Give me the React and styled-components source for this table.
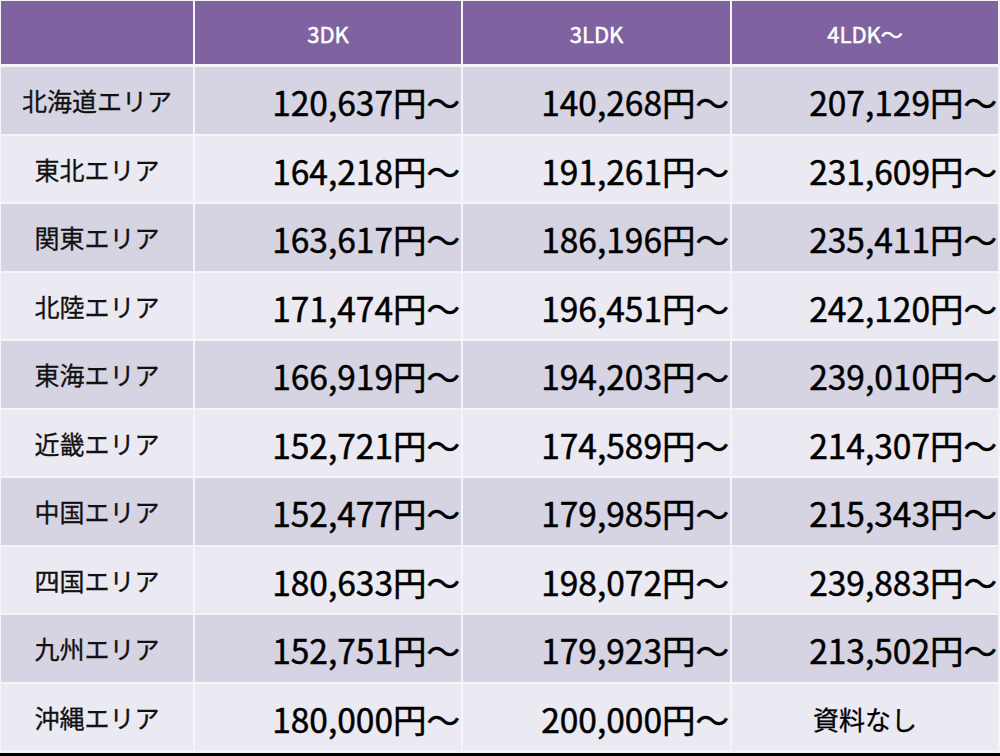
import React from "react";
import styled, { createGlobalStyle } from "styled-components";

const GlobalStyle = createGlobalStyle`
  html, body {
    margin: 0;
    padding: 0;
    background: #ffffff;
  }
  body {
    font-family: "Noto Sans CJK JP", "Noto Sans", sans-serif;
  }
`;

const Page = styled.div`
  width: 1000px;
  height: 756px;
  display: flex;
  flex-direction: column;
  background: #000;
`;

const Table = styled.div`
  height: 753px;
  box-sizing: border-box;
  padding: 1px 2px 3px 1px;
  background: #f6f4f9;
  display: grid;
  grid-template-columns: 192px 266px 267px 266px;
  grid-template-rows: 64px repeat(10, 1fr);
  column-gap: 2px;
  row-gap: 2px;
`;

const HeadCell = styled.div`
  background: #7f63a1;
  color: #ffffff;
  font-size: 22px;
  -webkit-text-stroke: 0.5px #ffffff;
  display: flex;
  align-items: center;
  justify-content: center;
  margin-bottom: 1px;
`;

const AreaCell = styled.div`
  background: ${(p) => (p.$odd ? "#d6d3e3" : "#ebe9f1")};
  color: #111;
  font-size: 25px;
  -webkit-text-stroke: 0.3px #111;
  display: flex;
  align-items: center;
  justify-content: center;
`;

const PriceCell = styled.div`
  background: ${(p) => (p.$odd ? "#d6d3e3" : "#ebe9f1")};
  color: #000;
  font-size: ${(p) => (p.$note ? "26px" : "33.5px")};
  -webkit-text-stroke: ${(p) => (p.$note ? "0.3px" : "0.5px")} #000;
  display: flex;
  align-items: center;
  justify-content: ${(p) => (p.$note ? "center" : "flex-end")};
  padding-right: ${(p) => (p.$note ? "0" : "1px")};
  padding-top: 3px;
  white-space: nowrap;
  overflow: hidden;
`;

const rows = [
  ["北海道エリア", "120,637円～", "140,268円～", "207,129円～"],
  ["東北エリア", "164,218円～", "191,261円～", "231,609円～"],
  ["関東エリア", "163,617円～", "186,196円～", "235,411円～"],
  ["北陸エリア", "171,474円～", "196,451円～", "242,120円～"],
  ["東海エリア", "166,919円～", "194,203円～", "239,010円～"],
  ["近畿エリア", "152,721円～", "174,589円～", "214,307円～"],
  ["中国エリア", "152,477円～", "179,985円～", "215,343円～"],
  ["四国エリア", "180,633円～", "198,072円～", "239,883円～"],
  ["九州エリア", "152,751円～", "179,923円～", "213,502円～"],
  ["沖縄エリア", "180,000円～", "200,000円～", "資料なし"],
];

export default function App() {
  return (
    <Page>
      <GlobalStyle />
      <Table>
        <HeadCell />
        <HeadCell>3DK</HeadCell>
        <HeadCell>3LDK</HeadCell>
        <HeadCell>4LDK～</HeadCell>
        {rows.map((r, i) => (
          <React.Fragment key={r[0]}>
            <AreaCell $odd={i % 2 === 0}>{r[0]}</AreaCell>
            {r.slice(1).map((v, j) => (
              <PriceCell key={j} $odd={i % 2 === 0} $note={!v.includes("円")}>
                {v}
              </PriceCell>
            ))}
          </React.Fragment>
        ))}
      </Table>
    </Page>
  );
}
